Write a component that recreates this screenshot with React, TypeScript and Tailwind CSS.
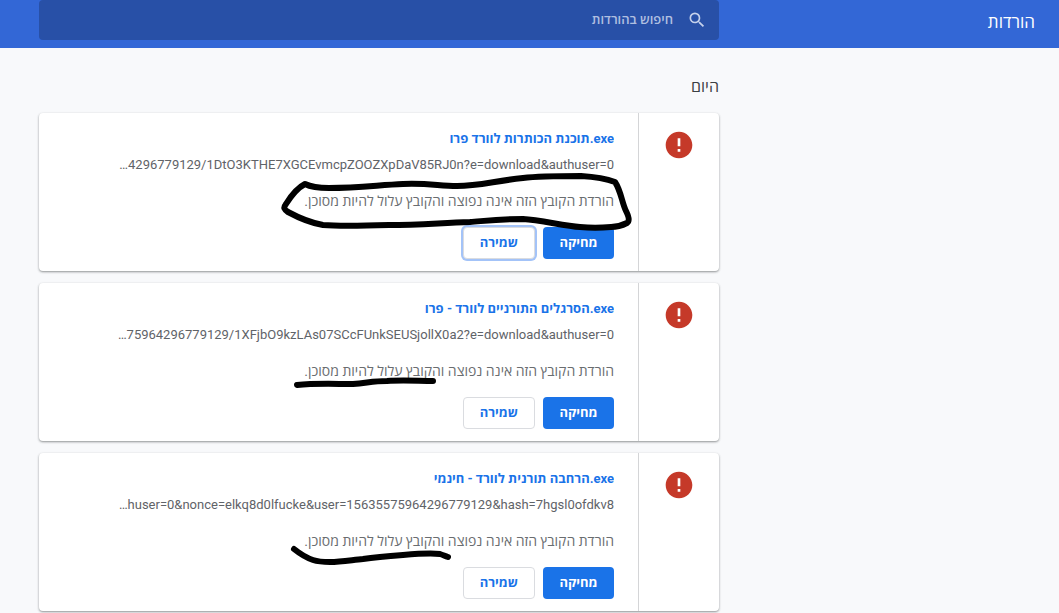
import { MdError, MdSearch } from "react-icons/md"
import { clsx } from "clsx"

const WARNING = "הורדת הקובץ הזה אינה נפוצה והקובץ עלול להיות מסוכן."

const downloads = [
  {
    name: "תוכנת הכותרות לוורד פרו.exe",
    url: "…4296779129/1DtO3KTHE7XGCEvmcpZOOZXpDaV85RJ0n?e=download&authuser=0",
    focused: true,
    // marker circle around the warning
    mark: "M266 71C272 74 280 75 290 75C320 75 340 72 364 71C390 70 400 73 418 73C440 73 455 68 484 65C500 63 530 63 542 63C558 64 568 66 576 69C582 78 583 90 587 98C590 104 591 108 588 110C582 113 578 114 572 114C560 115 552 115 541 114C525 113 502 107 484 106C460 106 445 108 431 109C400 110 380 112 350 112C320 113 295 113 284 112C272 110 262 106 249 99C245 96 244 95 247 91C252 83 258 75 266 71Z",
  },
  {
    name: "הסרגלים התורניים לוורד - פרו.exe",
    url: "…75964296779129/1XFjbO9kzLAs07SCcFUnkSEUSjollX0a2?e=download&authuser=0",
    focused: false,
    mark: "M258 102C276 100 296 101 314 101C328 100 334 98 348 98C364 97 380 98 394 98",
  },
  {
    name: "הרחבה תורנית לוורד - חינמי.exe",
    url: "…huser=0&nonce=elkq8d0lfucke&user=15635575964296779129&hash=7hgsl0ofdkv8",
    focused: false,
    mark: "M255 96C260 100 268 105 274 107C280 109 286 109 291 109C302 109 313 107 324 106C337 104 350 103 364 102C376 101 392 100 401 101C404 102 406 103 409 104",
  },
]

type Download = (typeof downloads)[number]

function DownloadCard({ item }: { item: Download }) {
  return (
    <li className="relative flex rounded bg-white shadow-[0_1px_2px_rgba(60,64,67,0.4),0_1px_3px_rgba(60,64,67,0.2)]">
      <div className="flex w-20 shrink-0 justify-center pt-4">
        <MdError className="h-8 w-8 text-[#c53929]" aria-hidden="true" />
      </div>

      <div className="min-w-0 flex-1 border-s border-[#d4d5d7] ps-6 pe-6 pt-4 pb-3">
        <a href="#" dir="ltr" className="block truncate text-right text-[13px] font-bold leading-5 text-[#1a73e8]">
          {item.name}
        </a>
        <p dir="ltr" className="mt-1.5 truncate text-right text-[13px] leading-5 text-[#5f6368]">
          {item.url}
        </p>
        <p className="mt-4 text-sm leading-5 text-[#6a6d70]">{WARNING}</p>
        <div className="mt-4 flex gap-2 text-[13px]">
          <button type="button" className="h-8 min-w-[71px] rounded bg-[#1a73e8] px-4 font-bold text-white">
            מחיקה
          </button>
          <button
            type="button"
            className={clsx(
              "h-8 min-w-[72px] rounded border border-[#dadce0] bg-white px-4 font-bold text-[#1a73e8]",
              item.focused && "ring-2 ring-[#a3c3f8]"
            )}
          >
            שמירה
          </button>
        </div>
      </div>

      <svg
        className="pointer-events-none absolute top-0 right-0 h-[158px] w-[680px]"
        viewBox="0 0 680 158"
        fill="none"
        stroke="#000"
        strokeWidth="6"
        strokeLinecap="round"
        strokeLinejoin="round"
        aria-hidden="true"
      >
        <path d={item.mark} />
      </svg>
    </li>
  )
}

export default function App() {
  return (
    <div
      dir="rtl"
      lang="he"
      className="min-h-screen bg-[#f8f9fb] font-[Roboto,'Open_Sans','Noto_Sans',sans-serif] text-sm text-[#202124]"
    >
      <header className="flex h-12 bg-[#3367d6] pe-[39px] text-white">
        <h1 className="w-[340px] shrink-0 ps-6 pt-2 text-[17px] leading-7">הורדות</h1>
        <label className="flex h-10 flex-1 items-center gap-3.5 rounded-sm bg-[#2850a7] px-3">
          <MdSearch className="h-5 w-5 shrink-0 text-[#c5d1eb]" aria-hidden="true" />
          <input
            type="search"
            aria-label="חיפוש בהורדות"
            placeholder="חיפוש בהורדות"
            className="min-w-0 flex-1 bg-transparent text-[13px] font-semibold outline-none placeholder:text-[#b0bfe0]"
          />
        </label>
      </header>

      <main className="ps-[340px] pe-[39px] pt-[29px]">
        <h2 className="mb-4 text-base leading-5 text-[#3c4043]">היום</h2>
        <ul className="flex flex-col gap-3">
          {downloads.map((item) => (
            <DownloadCard key={item.name} item={item} />
          ))}
        </ul>
      </main>
    </div>
  )
}
